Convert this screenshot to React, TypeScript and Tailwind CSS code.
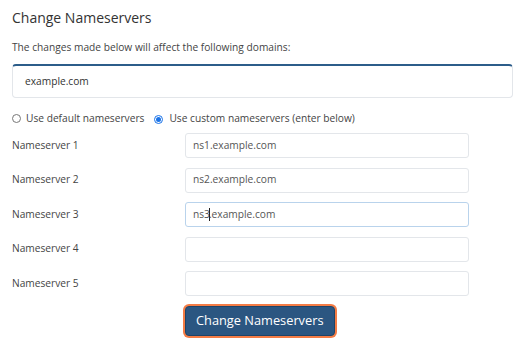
const rows = [
  { label: "Nameserver 1", value: "ns1.example.com" },
  { label: "Nameserver 2", value: "ns2.example.com" },
  { label: "Nameserver 3", value: "ns3.example.com", focused: true },
  { label: "Nameserver 4", value: "" },
  { label: "Nameserver 5", value: "" },
];

function Radio({ checked }: { checked?: boolean }) {
  return checked ? (
    <span className="inline-flex h-[9px] w-[9px] items-center justify-center rounded-full border border-[#1a73e8] bg-white">
      <span className="h-[5px] w-[5px] rounded-full bg-[#1a73e8]" />
    </span>
  ) : (
    <span className="inline-block h-[9px] w-[9px] rounded-full border border-[#777]" />
  );
}

export default function App() {
  return (
    <div
      className="h-[346px] w-[521px] bg-white pl-3 pr-2 text-[10.2px] text-[#444]"
      style={{ fontFamily: '"Open Sans", sans-serif' }}
    >
      <h2 className="pt-[8px] text-[14px] leading-[20px] text-[#333]">Change Nameservers</h2>
      <p className="mt-[12px] leading-[14px]">The changes made below will affect the following domains:</p>
      <div className="mt-[10px] flex h-[34px] items-center rounded-[4px] border border-[#e3e6ea] border-t-2 border-t-[#2c5d8a] px-[12px] text-[#333]">
        example.com
      </div>
      <div className="mt-[13px] flex items-center leading-[14px]">
        <Radio />
        <span className="ml-[5px]">Use default nameservers</span>
        <span className="ml-[10px]">
          <Radio checked />
        </span>
        <span className="ml-[6px]">Use custom nameservers (enter below)</span>
      </div>
      <div className="mt-[8px] flex flex-col gap-[9.5px]">
        {rows.map((r) => (
          <div key={r.label} className="flex items-center">
            <div className="w-[173px]">{r.label}</div>
            <div
              className={
                "flex h-[25px] w-[284px] items-center rounded-[3px] border px-[7px] text-[#555] " +
                (r.focused ? "border-[#b9d3ec]" : "border-[#e3e6ea]")
              }
            >
              {r.focused ? (
                <>
                  ns3<span className="-mx-[1px] inline-block h-[13px] w-[1px] bg-[#222]" />.example.com
                </>
              ) : (
                r.value
              )}
            </div>
          </div>
        ))}
      </div>
      <div className="mt-[10px] pl-[173px]">
        <button className="h-[30px] rounded-[4px] border border-[#1f4468] bg-[#2b5681] px-[10px] text-[12.8px] text-white ring-2 ring-[#f47c45]">
          Change Nameservers
        </button>
      </div>
    </div>
  );
}
